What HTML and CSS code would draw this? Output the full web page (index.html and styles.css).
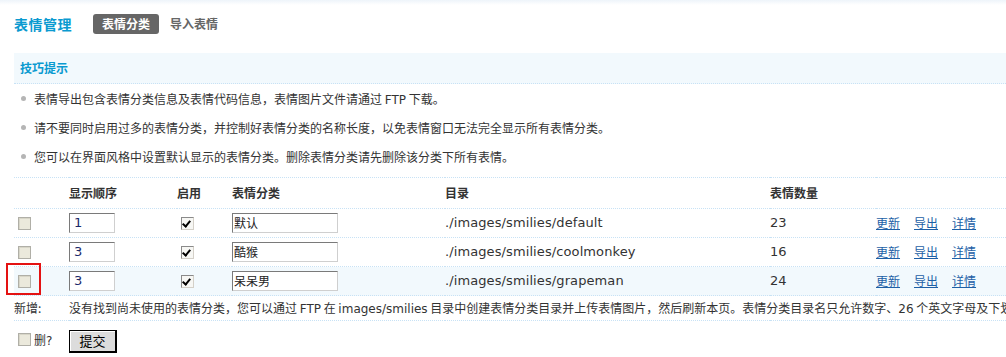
FILE: index.html
```html
<!DOCTYPE html>
<html lang="zh-CN">
<head>
<meta charset="utf-8">
<title>表情管理</title>
<link rel="stylesheet" href="styles.css">
</head>
<body>
<div class="topbar"></div>
<div class="page">
  <div class="header">
    <h3 class="title">表情管理</h3>
    <ul class="tabs">
      <li class="tab current">表情分类</li>
      <li class="tab">导入表情</li>
    </ul>
  </div>

  <div class="tips">
    <div class="tips-head">技巧提示</div>
    <ul class="tips-list">
      <li>表情导出包含表情分类信息及表情代码信息，表情图片文件请通过 <span class="lat">FTP</span> 下载。</li>
      <li>请不要同时启用过多的表情分类，并控制好表情分类的名称长度，以免表情窗口无法完全显示所有表情分类。</li>
      <li>您可以在界面风格中设置默认显示的表情分类。删除表情分类请先删除该分类下所有表情。</li>
    </ul>
  </div>

  <table class="grid">
    <colgroup>
      <col class="c1"><col class="c2"><col class="c3"><col class="c4"><col class="c5"><col class="c6"><col class="c7">
    </colgroup>
    <tr class="head">
      <th></th>
      <th>显示顺序</th>
      <th>启用</th>
      <th>表情分类</th>
      <th>目录</th>
      <th>表情数量</th>
      <th></th>
    </tr>
    <tr class="row">
      <td><span class="cb off"></span></td>
      <td><span class="inp num">1</span></td>
      <td><span class="cb on"></span></td>
      <td><span class="inp name">默认</span></td>
      <td class="lat big">./images/smilies/default</td>
      <td class="lat big">23</td>
      <td class="ops"><a>更新</a><a>导出</a><a>详情</a></td>
    </tr>
    <tr class="row">
      <td><span class="cb off"></span></td>
      <td><span class="inp num">3</span></td>
      <td><span class="cb on"></span></td>
      <td><span class="inp name">酷猴</span></td>
      <td class="lat big">./images/smilies/coolmonkey</td>
      <td class="lat big">16</td>
      <td class="ops"><a>更新</a><a>导出</a><a>详情</a></td>
    </tr>
    <tr class="row hover">
      <td><span class="cb off"></span></td>
      <td><span class="inp num">3</span></td>
      <td><span class="cb on"></span></td>
      <td><span class="inp name">呆呆男</span></td>
      <td class="lat big">./images/smilies/grapeman</td>
      <td class="lat big">24</td>
      <td class="ops"><a>更新</a><a>导出</a><a>详情</a></td>
    </tr>
    <tr class="add">
      <td>新增:</td>
      <td colspan="6" class="addtext">没有找到尚未使用的表情分类，您可以通过 <span class="lat">FTP</span> 在 <span class="lat">images/smilies</span> 目录中创建表情分类目录并上传表情图片，然后刷新本页。表情分类目录名只允许数字、<span class="lat">26</span> 个英文字母及下划线组成</td>
    </tr>
    <tr class="submit">
      <td><span class="cb off"></span><span class="del">删<span class="lat">?</span></span></td>
      <td colspan="6"><span class="btn">提交</span></td>
    </tr>
  </table>
</div>
<div class="focusmark"></div>
</body>
</html>
```

FILE: styles.css
```css
html, body {
  margin: 0;
  padding: 0;
  background: #fff;
  overflow: hidden;
}
body {
  width: 1006px;
  height: 357px;
  font: 12px/1.5 "Noto Sans CJK SC", "DejaVu Sans", sans-serif;
  color: #333;
  position: relative;
}
.lat {
  font-family: "DejaVu Sans", "Noto Sans CJK SC", sans-serif;
}
.lat.big {
  font-size: 13px;
  letter-spacing: 0.1px;
}
.topbar {
  height: 5px;
  background: linear-gradient(#eef4fa, #fff);
}
.page {
  padding-left: 14px;
}
.header {
  display: flex;
  align-items: center;
  height: 20px;
  margin-top: 9px;
}
.title {
  margin: 0;
  font-size: 14px;
  font-weight: bold;
  color: #0a9ad0;
  line-height: 20px;
  width: 79px;
  letter-spacing: 0.5px;
}
.tabs {
  display: flex;
  margin: 0;
  padding: 0;
  list-style: none;
}
.tab {
  font-weight: bold;
  color: #666;
  line-height: 20px;
  padding: 0 9px;
  margin-right: 2px;
}
.tab.current {
  background: #666;
  color: #fff;
  border-radius: 3px;
}
.tips {
  margin-top: 19px;
}
.tips-head {
  background: #f2f9fd;
  color: #0a9ad0;
  font-weight: bold;
  height: 30px;
  line-height: 30px;
  padding-left: 6px;
  border-bottom: 1px dotted #c8e2f5;
}
.tips-list {
  list-style: none;
  margin: 0;
  padding: 0;
}
.tips-list li {
  height: 29px;
  line-height: 29px;
  padding-left: 20px;
  position: relative;
  white-space: nowrap;
}
.tips-list li::before {
  content: "";
  position: absolute;
  left: 7px;
  top: 12px;
  width: 5px;
  height: 5px;
  border-radius: 50%;
  background: #b5b5b5;
}
.grid {
  margin-top: 6px;
  border-collapse: collapse;
  table-layout: fixed;
  width: 1200px;
}
.c1 { width: 55px; }
.c2 { width: 108px; }
.c3 { width: 55px; }
.c4 { width: 213px; }
.c5 { width: 325px; }
.c6 { width: 106px; }
.c7 { width: 338px; }
.grid th, .grid td {
  padding: 0;
  text-align: left;
  vertical-align: middle;
  white-space: nowrap;
}
.head th {
  height: 30px;
  font-weight: bold;
  border-top: 1px dotted #c8e2f5;
  border-bottom: 1px dotted #c8e2f5;
}
.row td {
  height: 28px;
  border-bottom: 1px dotted #c8e2f5;
}
.row.hover td {
  background: #f2f9fd;
}
.cb {
  display: inline-block;
  box-sizing: border-box;
  width: 13px;
  height: 13px;
  vertical-align: middle;
  position: relative;
  top: -1px;
}
.cb.off {
  margin-left: 4px;
  border: 1px solid #b0afa7;
  background: #ebe9dc;
  box-shadow: inset 1px 1px 0 #d8d6c8;
}
.cb.on {
  margin-left: 4px;
  border: 1px solid #8a8a8a;
  border-right-color: #d4d0c8;
  border-bottom-color: #d4d0c8;
  background: #f7f7f4;
}
.cb.on::after {
  content: "";
  position: absolute;
  left: 2px;
  top: 1px;
  width: 3px;
  height: 6px;
  border-right: 2px solid #000;
  border-bottom: 2px solid #000;
  transform: rotate(40deg);
}
.inp {
  display: inline-block;
  box-sizing: border-box;
  height: 20px;
  line-height: 18px;
  border: 1px solid #7a7a7a;
  border-right-color: #cfcfcf;
  border-bottom-color: #cfcfcf;
  background: #fff;
  color: #333;
  vertical-align: middle;
}
.inp.num {
  width: 46px;
  padding-left: 4px;
  font-family: "DejaVu Sans", sans-serif;
  font-size: 13px;
  color: #1a2a6a;
}
.inp.name {
  width: 106px;
  padding-left: 1px;
  color: #222;
}
.ops a {
  color: #1d5fa6;
  text-decoration: underline;
  margin-right: 14px;
  cursor: pointer;
}
.add td {
  height: 24px;
  border-bottom: 1px dotted #c8e2f5;
}
.submit td {
  height: 37px;
}
.del {
  margin-left: 3px;
  vertical-align: middle;
}
.btn {
  display: inline-block;
  box-sizing: border-box;
  width: 48px;
  height: 23px;
  line-height: 20px;
  text-align: center;
  background: #dcdcdc;
  border: 1px solid #000;
  border-right-width: 2px;
  border-bottom-width: 2px;
  box-shadow: inset 1px 1px 0 #fff;
  color: #000;
  font-size: 13px;
  vertical-align: middle;
  margin-top: 3px;
}
.focusmark {
  position: absolute;
  left: 6px;
  top: 263px;
  width: 35px;
  height: 32px;
  box-sizing: border-box;
  border: 2px solid #e41212;
  pointer-events: none;
}
```
